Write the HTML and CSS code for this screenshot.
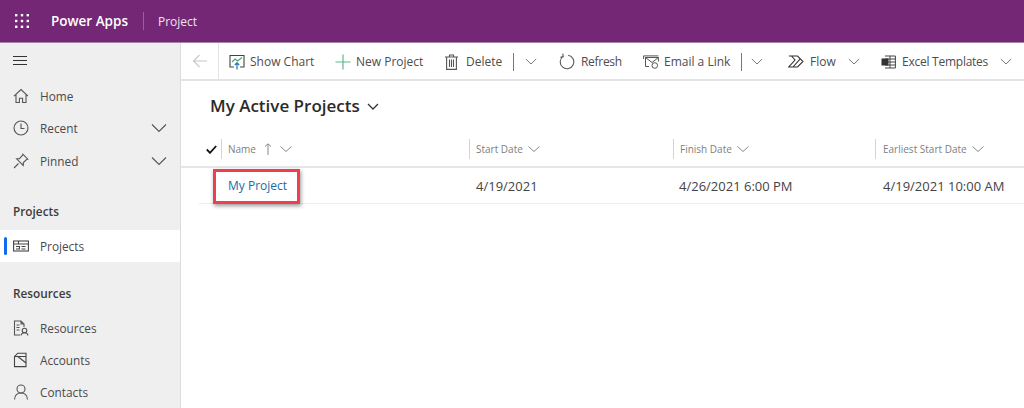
FILE: index.html
```html
<!DOCTYPE html>
<html lang="en">
<head>
<meta charset="utf-8">
<title>Project</title>
<link rel="stylesheet" href="styles.css">
</head>
<body>
<header class="topbar">
  <svg class="waffle" width="16" height="16" viewBox="0 0 16 16" fill="#fff"><rect x="1" y="1" width="2.4" height="2.4"/><rect x="6.8" y="1" width="2.4" height="2.4"/><rect x="12.6" y="1" width="2.4" height="2.4"/><rect x="1" y="6.8" width="2.4" height="2.4"/><rect x="6.8" y="6.8" width="2.4" height="2.4"/><rect x="12.6" y="6.8" width="2.4" height="2.4"/><rect x="1" y="12.6" width="2.4" height="2.4"/><rect x="6.8" y="12.6" width="2.4" height="2.4"/><rect x="12.6" y="12.6" width="2.4" height="2.4"/></svg>
  <span class="brand">Power Apps</span>
  <span class="topsep"></span>
  <span class="appname">Project</span>
</header>
<div class="shell">
  <nav class="side">
    <div class="burger"><svg width="16" height="12" viewBox="0 0 16 12" stroke="#333" stroke-width="1.2"><path d="M1 1.500h14M1 5.500h14M1 9.500h14"/></svg></div>
    <div class="navrow"><svg class="ni" width="16" height="16" viewBox="0 0 16 16" fill="none" stroke="#555" stroke-width="1.1"><path d="M1 8.2 8 1.6l7 6.6M3 6.600V14.500h3.400v-4.200h3.200v4.200H13V6.600"/></svg><span class="navlabel">Home</span></div>
    <div class="navrow"><svg class="ni" width="16" height="16" viewBox="0 0 16 16" fill="none" stroke="#555" stroke-width="1.1"><circle cx="8" cy="8" r="7"/><path d="M8 3.500V8.500H11.500"/></svg><span class="navlabel">Recent</span><svg class="navchev" width="16" height="10" viewBox="0 0 16 10" fill="none" stroke="#555" stroke-width="1.1"><path d="M1 1.500 8 8.500l7-7"/></svg></div>
    <div class="navrow navrow-pinned"><svg class="ni" width="16" height="16" viewBox="0 0 16 16" fill="none" stroke="#555" stroke-width="1.1"><path d="M1 15 5.500 10.500M9.800 1.200 14.800 6.200 13.600 6.600 10.400 9.600 10.200 12.400 3.600 5.800 6.400 5.600 9.400 2.400Z"/></svg><span class="navlabel">Pinned</span><svg class="navchev" width="16" height="10" viewBox="0 0 16 10" fill="none" stroke="#555" stroke-width="1.1"><path d="M1 1.500 8 8.500l7-7"/></svg></div>
    <div class="navhead navhead-first">Projects</div>
    <div class="navrow navrow-active"><span class="activebar"></span><svg class="ni" width="16" height="14" viewBox="0 0 16 14" fill="none" stroke="#444" stroke-width="1.1"><rect x=".6" y="2" width="14.800" height="10"/><path d="M.6 5h14.800M5.500 2v3M3 7.500h3.500v2.500H3M8.500 7.500h4M8.500 10h4"/></svg><span class="navlabel">Projects</span></div>
    <div class="navhead">Resources</div>
    <div class="navrow"><svg class="ni" width="16" height="16" viewBox="0 0 16 16" fill="none" stroke="#555" stroke-width="1.1"><path d="M7 15H1.500V1H8l3 3v3M8 1v3h3M3.500 5h3M3.500 7.500h3M3.500 10h3"/><circle cx="11.500" cy="10.500" r="2.300"/><path d="M8 15.500c.4-2 1.800-2.800 3.500-2.800s3.100.8 3.500 2.800"/></svg><span class="navlabel">Resources</span></div>
    <div class="navrow"><svg class="ni" width="16" height="16" viewBox="0 0 16 16" fill="none" stroke="#444" stroke-width="1.1"><path d="M1.500 4.500h11.500M1.500 4.500V14.600H13V1.200H4.800L1.500 4.500ZM4.800 4.500l8.200 6.500"/></svg><span class="navlabel">Accounts</span></div>
    <div class="navrow"><svg class="ni" width="16" height="16" viewBox="0 0 16 16" fill="none" stroke="#555" stroke-width="1.1"><circle cx="8" cy="5" r="4"/><path d="M1.500 15.500c.3-4 3-6.500 6.500-6.500s6.200 2.500 6.500 6.500"/></svg><span class="navlabel">Contacts</span></div>
  </nav>
  <main class="content">
    <div class="cmdbar">
      <div class="backcell"><svg width="16" height="14" viewBox="0 0 16 14" fill="none" stroke="#c8c8c8" stroke-width="1.1"><path d="M15 7H1.500M7.500 1 1.500 7l6 6"/></svg></div>
      <div class="cmd cmd-chart"><svg width="16" height="16" viewBox="0 0 16 16" fill="none"><path d="M5 13H1V1.500h14V13h-4" stroke="#444" stroke-width="1.1"/><path d="M3 8l3-3 2.500 2L13 3.500" stroke="#3aa76d" stroke-width="1.100"/><path d="M8 15.500V9M5.800 11 8 8.800l2.200 2.200" stroke="#2672c0" stroke-width="1.200"/></svg><span>Show Chart</span></div>
      <div class="cmd cmd-new"><svg width="16" height="16" viewBox="0 0 16 16" fill="none" stroke="#5bb98b" stroke-width="1.200"><path d="M8 .5v15M.5 8h15"/></svg><span>New Project</span></div>
      <div class="cmd cmd-delete"><svg width="13" height="16" viewBox="0 0 13 16" fill="none" stroke="#555" stroke-width="1.100"><path d="M0 3h13M4.500 3V1h4v2M1.600 3v12.400h9.800V3M4.500 5.500v7.500M6.500 5.500v7.500M8.500 5.500v7.500"/></svg><span class="label-delete">Delete</span><i class="cmdsep"></i><svg class="chev" width="12" height="7" viewBox="0 0 12 7" fill="none" stroke="#777" stroke-width="1"><path d="M.8 1 6 6l5.200-5"/></svg></div>
      <div class="cmd cmd-refresh"><svg width="16" height="17" viewBox="0 0 16 17" fill="none" stroke="#555" stroke-width="1.100"><path d="M9.200 2.200A6.800 6.800 0 1 1 4 3.400M3.700.6 4.300 3.600 1.500 4.400"/></svg><span class="label-refresh">Refresh</span></div>
      <div class="cmd cmd-email"><svg width="16" height="14" viewBox="0 0 16 14" fill="none" stroke="#555" stroke-width="1"><path d="M6 11.500H2.500V2.500H15.400V6.500M.6 4V.9h14.800M2.500 2.500 9 7.500l6.400-5"/><circle cx="11.800" cy="10.500" r="2.800"/></svg><span>Email a Link</span><i class="cmdsep"></i><svg class="chev" width="12" height="7" viewBox="0 0 12 7" fill="none" stroke="#777" stroke-width="1"><path d="M.8 1 6 6l5.200-5"/></svg></div>
      <div class="cmd cmd-flow"><svg width="16" height="13" viewBox="0 0 16 13" fill="none" stroke="#333" stroke-width="1.100"><path d="M.8 1H9.500L15 6.500 9.500 12H.8L7 5 3.500 1M12.200 3.800 5 12"/></svg><span>Flow</span><svg class="chev chev-flow" width="12" height="7" viewBox="0 0 12 7" fill="none" stroke="#777" stroke-width="1"><path d="M.8 1 6 6l5.200-5"/></svg></div>
      <div class="cmd cmd-excel"><svg width="15" height="14" viewBox="0 0 15 14" fill="none"><path d="M4 1h10.400v12H4M4 4h10.400M4 7h10.400M4 10h10.400M9 1v12" stroke="#444" stroke-width="1"/><rect x=".5" y="3.500" width="7" height="7" fill="#333"/></svg><span class="label-excel">Excel Templates</span><svg class="chev chev-excel" width="12" height="7" viewBox="0 0 12 7" fill="none" stroke="#777" stroke-width="1"><path d="M.8 1 6 6l5.200-5"/></svg></div>
    </div>
    <h1 class="viewtitle">My Active Projects<svg class="titlechev" width="12" height="7" viewBox="0 0 12 7" fill="none" stroke="#333" stroke-width="1.300"><path d="M1 1l5 5 5-5"/></svg></h1>
    <div class="grid">
      <div class="ghead">
        <div class="gcheck"><svg width="11" height="9" viewBox="0 0 11 9" fill="none" stroke="#111" stroke-width="1.800"><path d="M.8 4.500 4 7.800 10.200 1"/></svg></div>
        <div class="gcol gcol-name">Name<svg class="sortup" width="8" height="12" viewBox="0 0 8 12" fill="none" stroke="#888" stroke-width="1"><path d="M4 12V1M1 3.500 4 .8l3 2.700"/></svg><svg class="hchev hchev-name" width="12" height="6" viewBox="0 0 12 6" fill="none" stroke="#888" stroke-width="1"><path d="M.5.500 6 5.500l5.500-5"/></svg></div>
        <div class="gcol gcol-start">Start Date<svg class="hchev" width="12" height="6" viewBox="0 0 12 6" fill="none" stroke="#888" stroke-width="1"><path d="M.5.500 6 5.500l5.500-5"/></svg></div>
        <div class="gcol gcol-finish">Finish Date<svg class="hchev" width="12" height="6" viewBox="0 0 12 6" fill="none" stroke="#888" stroke-width="1"><path d="M.5.500 6 5.500l5.500-5"/></svg></div>
        <div class="gcol gcol-early">Earliest Start Date<svg class="hchev" width="12" height="6" viewBox="0 0 12 6" fill="none" stroke="#888" stroke-width="1"><path d="M.5.500 6 5.500l5.500-5"/></svg></div>
      </div>
      <div class="grow">
        <div class="gcell gcell-name"><a class="reclink">My Project</a></div>
        <div class="gcell gcell-start">4/19/2021</div>
        <div class="gcell gcell-finish">4/26/2021 6:00 PM</div>
        <div class="gcell gcell-early">4/19/2021 10:00 AM</div>
        <span class="redbox"></span>
      </div>
    </div>
  </main>
</div>
</body>
</html>
```
FILE: styles.css
```css
* { box-sizing: border-box; }
html, body { margin: 0; height: 408px; overflow: hidden; background: #fff; }
body { font-family: "Open Sans", "Noto Sans", sans-serif; font-size: 12px; color: #444; }

.topbar { height: 43px; background: #742774; color: #fff; display: flex; align-items: center; padding-left: 14px; border-bottom: 1px solid #a983ab; }
.brand { font-size: 13.5px; font-weight: 600; margin-left: 21px; width: 92px; white-space: nowrap; }
.topsep { width: 1px; height: 18px; background: #96649a; }
.appname { font-size: 12px; margin-left: 14px; color: #f0e6f0; }

.shell { display: flex; height: 365px; }
.side { width: 181px; flex: none; background: #efefef; border-right: 1px solid #dcdcdc; overflow: hidden; }
.burger { height: 37px; padding: 12px 0 0 12px; }
.burger svg { display: block; }
.navrow { height: 32px; display: flex; align-items: center; padding-left: 13px; position: relative; color: #4a4a4a; font-size: 11.8px; white-space: nowrap; }
.navrow-pinned { margin-top: 1px; }
.ni { flex: none; width: 16px; }
.navlabel { margin-left: 11px; }
.navchev { margin-left: auto; margin-right: 13px; }
.navhead { height: 32px; padding-left: 13px; line-height: 32px; font-size: 11.8px; font-weight: 600; color: #3c3c3c; }
.navhead-first { margin-top: 18px; margin-bottom: 3px; }
.navrow-active { background: #fff; }
.navrow-active + .navhead { margin-top: 15px; }
.navrow-active + .navhead + .navrow { margin-top: 3px; }
.activebar { position: absolute; left: 4px; top: 7px; width: 3px; height: 18px; background: #0f6cf2; border-radius: 2px; }

.content { flex: 1; min-width: 0; position: relative; }
.cmdbar { height: 38px; display: flex; align-items: center; border-bottom: 2px solid #e3e3e3; white-space: nowrap; font-size: 12px; color: #4d4d4d; overflow: hidden; }
.backcell { width: 38px; height: 36px; flex: none; border-right: 1px solid #e3e3e3; display: flex; align-items: center; padding-left: 11px; }
.cmd { display: flex; align-items: center; flex: none; padding-top: 1px; }
.cmd svg { flex: none; }
.cmd-chart { margin-left: 10px; width: 106px; gap: 5px; }
.cmd-new { width: 110px; gap: 5px; }
.cmd-delete { width: 114px; gap: 8px; }
.label-delete { width: 39px; }
.cmd-delete .cmdsep { margin-left: 0; margin-right: 3px; }
.cmd-refresh { width: 84px; gap: 6px; }
.label-refresh { letter-spacing: -.3px; }
.cmd-email { width: 145px; gap: 5px; }
.cmd-email .cmdsep { margin-left: 6px; margin-right: 4px; }
.cmdsep { display: block; width: 1px; height: 18px; background: #777; }
.cmd-flow { width: 93px; gap: 6px; }
.chev-flow { margin-left: 6px; }
.cmd-excel { gap: 6px; }
.label-excel { letter-spacing: -.25px; }
.chev-excel { margin-left: 6px; }

.viewtitle { margin: 13px 0 0 29px; height: 24px; font-size: 17px; line-height: 24px; font-weight: 600; color: #2b2b2b; display: flex; align-items: center; white-space: nowrap; }
.titlechev { margin-left: 7px; margin-top: 1px; }

.grid { margin-top: 19px; }
.ghead { height: 31px; padding-bottom: 5px; display: flex; align-items: center; border-bottom: 2px solid #e6e6e6; color: #808080; font-size: 10px; }
.gcheck { width: 40px; flex: none; padding-left: 25px; display: flex; align-items: center; }
.gcol { flex: none; height: 20px; border-left: 1px solid #d4d4d4; padding-left: 6px; display: flex; align-items: center; white-space: nowrap; }
.gcol-name { width: 248px; }
.gcol-start { width: 204px; }
.gcol-finish { width: 202px; }
.gcol-early { flex: 1; padding-left: 7px; }
.sortup { margin-left: 8px; }
.hchev { margin-left: 5px; }
.hchev-name { margin-left: 8px; }

.grow { height: 36px; margin-left: 18px; display: flex; align-items: center; border-bottom: 1px solid #ececec; font-size: 13px; color: #444; white-space: nowrap; position: relative; }
.gcell { flex: none; }
.gcell-name { width: 277px; padding-left: 29px; font-size: 12px; }
.gcell-start { width: 203px; }
.gcell-finish { width: 204px; }
.reclink { color: #1b6aa5; }
.redbox { position: absolute; left: 14px; top: 1px; width: 87px; height: 35px; border: 3px solid #ee3f4f; box-shadow: 1px 2px 4px rgba(0,0,0,.4); }
```
